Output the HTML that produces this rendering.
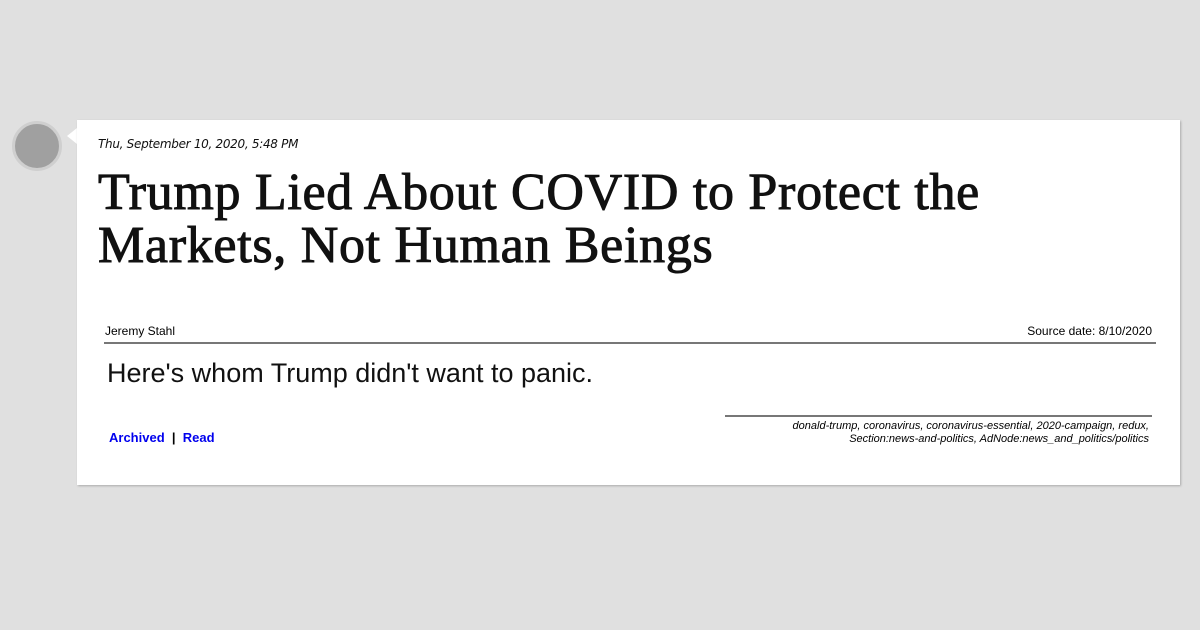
<!DOCTYPE html>
<html><head><style>
body{margin:0;width:1200px;height:630px;background:#e0e0e0;position:relative;overflow:hidden;font-family:"Liberation Sans",sans-serif}
.av{position:absolute;left:12px;top:121px;width:44px;height:44px;border-radius:50%;background:#a0a0a0;border:3px solid #cfcfcf}
.tri{position:absolute;left:67px;top:128px;width:0;height:0;border-top:8px solid transparent;border-bottom:8px solid transparent;border-right:10px solid #fff}
.card{position:absolute;left:77px;top:120px;width:1103px;height:365px;background:#fff;box-shadow:1px 1px 2px #aaa}
.date{position:absolute;left:21px;top:17px;font-size:12px;font-style:italic;color:#111;font-family:"DejaVu Sans",sans-serif;letter-spacing:-0.3px}
h1{position:absolute;left:21px;top:46px;margin:0;font-family:"Liberation Serif",serif;font-weight:normal;font-size:52px;line-height:53px;letter-spacing:0.7px;color:#111;-webkit-text-stroke:1px #111;width:1050px}
.auth{position:absolute;left:28px;top:204px;font-size:12px}
.src{position:absolute;right:28px;top:204px;font-size:12px}
.hr1{position:absolute;left:27px;top:222px;width:1052px;height:2px;background:#777}
.sum{position:absolute;left:30px;top:238px;font-size:27px;color:#111}
.hr2{position:absolute;left:648px;top:295px;width:427px;height:2px;background:#777}
.tags{position:absolute;right:31px;top:300px;font-size:11px;font-style:italic;text-align:right;line-height:13px}
.links{position:absolute;left:32px;top:310px;font-size:13px;font-weight:bold}
.links a{color:#0000ee;text-decoration:none}
</style></head><body>
<div class="av"></div><div class="tri"></div>
<div class="card">
<div class="date">Thu, September 10, 2020, 5:48 PM</div>
<h1>Trump Lied About COVID to Protect the Markets, Not Human Beings</h1>
<div class="auth">Jeremy Stahl</div>
<div class="src">Source date: 8/10/2020</div>
<div class="hr1"></div>
<div class="sum">Here's whom Trump didn't want to panic.</div>
<div class="hr2"></div>
<div class="tags">donald-trump, coronavirus, coronavirus-essential, 2020-campaign, redux,<br>Section:news-and-politics, AdNode:news_and_politics/politics</div>
<div class="links"><a>Archived</a> &nbsp;|&nbsp; <a>Read</a></div>
</div>
</body></html>
